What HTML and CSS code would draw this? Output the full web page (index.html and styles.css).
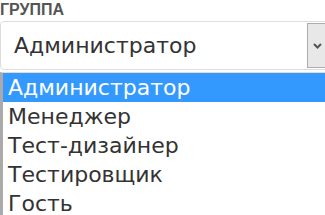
FILE: index.html
```html
<!DOCTYPE html>
<html lang="ru">
  <head>
    <meta charset="UTF-8" />
    <title>Группа</title>
    <link rel="stylesheet" href="styles.css">
  </head>
  <body>
    <div class="field">
      <div class="field-label">ГРУППА</div>

      <!-- Closed select -->
      <div class="select-box">
        <span class="select-value">Администратор</span>
        <span class="select-btn">
          <svg width="9" height="6" viewBox="0 0 9 6">
            <path d="M1 1 L4.5 4.5 L8 1" fill="none" stroke="#555" stroke-width="2" />
          </svg>
        </span>
      </div>

      <!-- Opened option list -->
      <ul class="options">
        <li class="option active">Администратор</li>
        <li class="option">Менеджер</li>
        <li class="option">Тест-дизайнер</li>
        <li class="option">Тестировщик</li>
        <li class="option">Гость</li>
      </ul>
    </div>
  </body>
</html>
```

FILE: styles.css
```css
body {
  margin: 0;
  background-color: #fff;
  overflow: hidden;
  font-family: "DejaVu Sans", Verdana, sans-serif;
}

.field {
  width: 330px;
}

.field-label {
  font-family: "Liberation Sans", Arial, sans-serif;
  font-weight: bold;
  font-size: 16px;
  line-height: 15px;
  padding-top: 2px;
  color: #555;
}

/* Closed select */
.select-box {
  display: flex;
  align-items: stretch;
  margin-top: 4px;
  height: 45px;
  border: 1px solid #ddd;
  border-radius: 4px;
  padding: 1px 0;
}

.select-value {
  flex: 1;
  display: flex;
  align-items: center;
  padding-left: 13px;
  font-size: 22px;
  color: #333;
}

.select-btn {
  width: 18px;
  display: flex;
  align-items: center;
  justify-content: center;
  padding-right: 2px;
  background-color: #e8e8e8;
  border: 1px solid #adadad;
}

/* Option list */
.options {
  list-style: none;
  margin: 2px 0 0;
  padding: 0;
  border-top: 1px solid #ddd;
  border-left: 3px solid #aaa;
}

.option {
  height: 29px;
  line-height: 29px;
  padding-left: 5px;
  font-size: 22px;
  color: #333;
}

.option.active {
  background-color: #3399ff;
  color: #fff;
}
```
